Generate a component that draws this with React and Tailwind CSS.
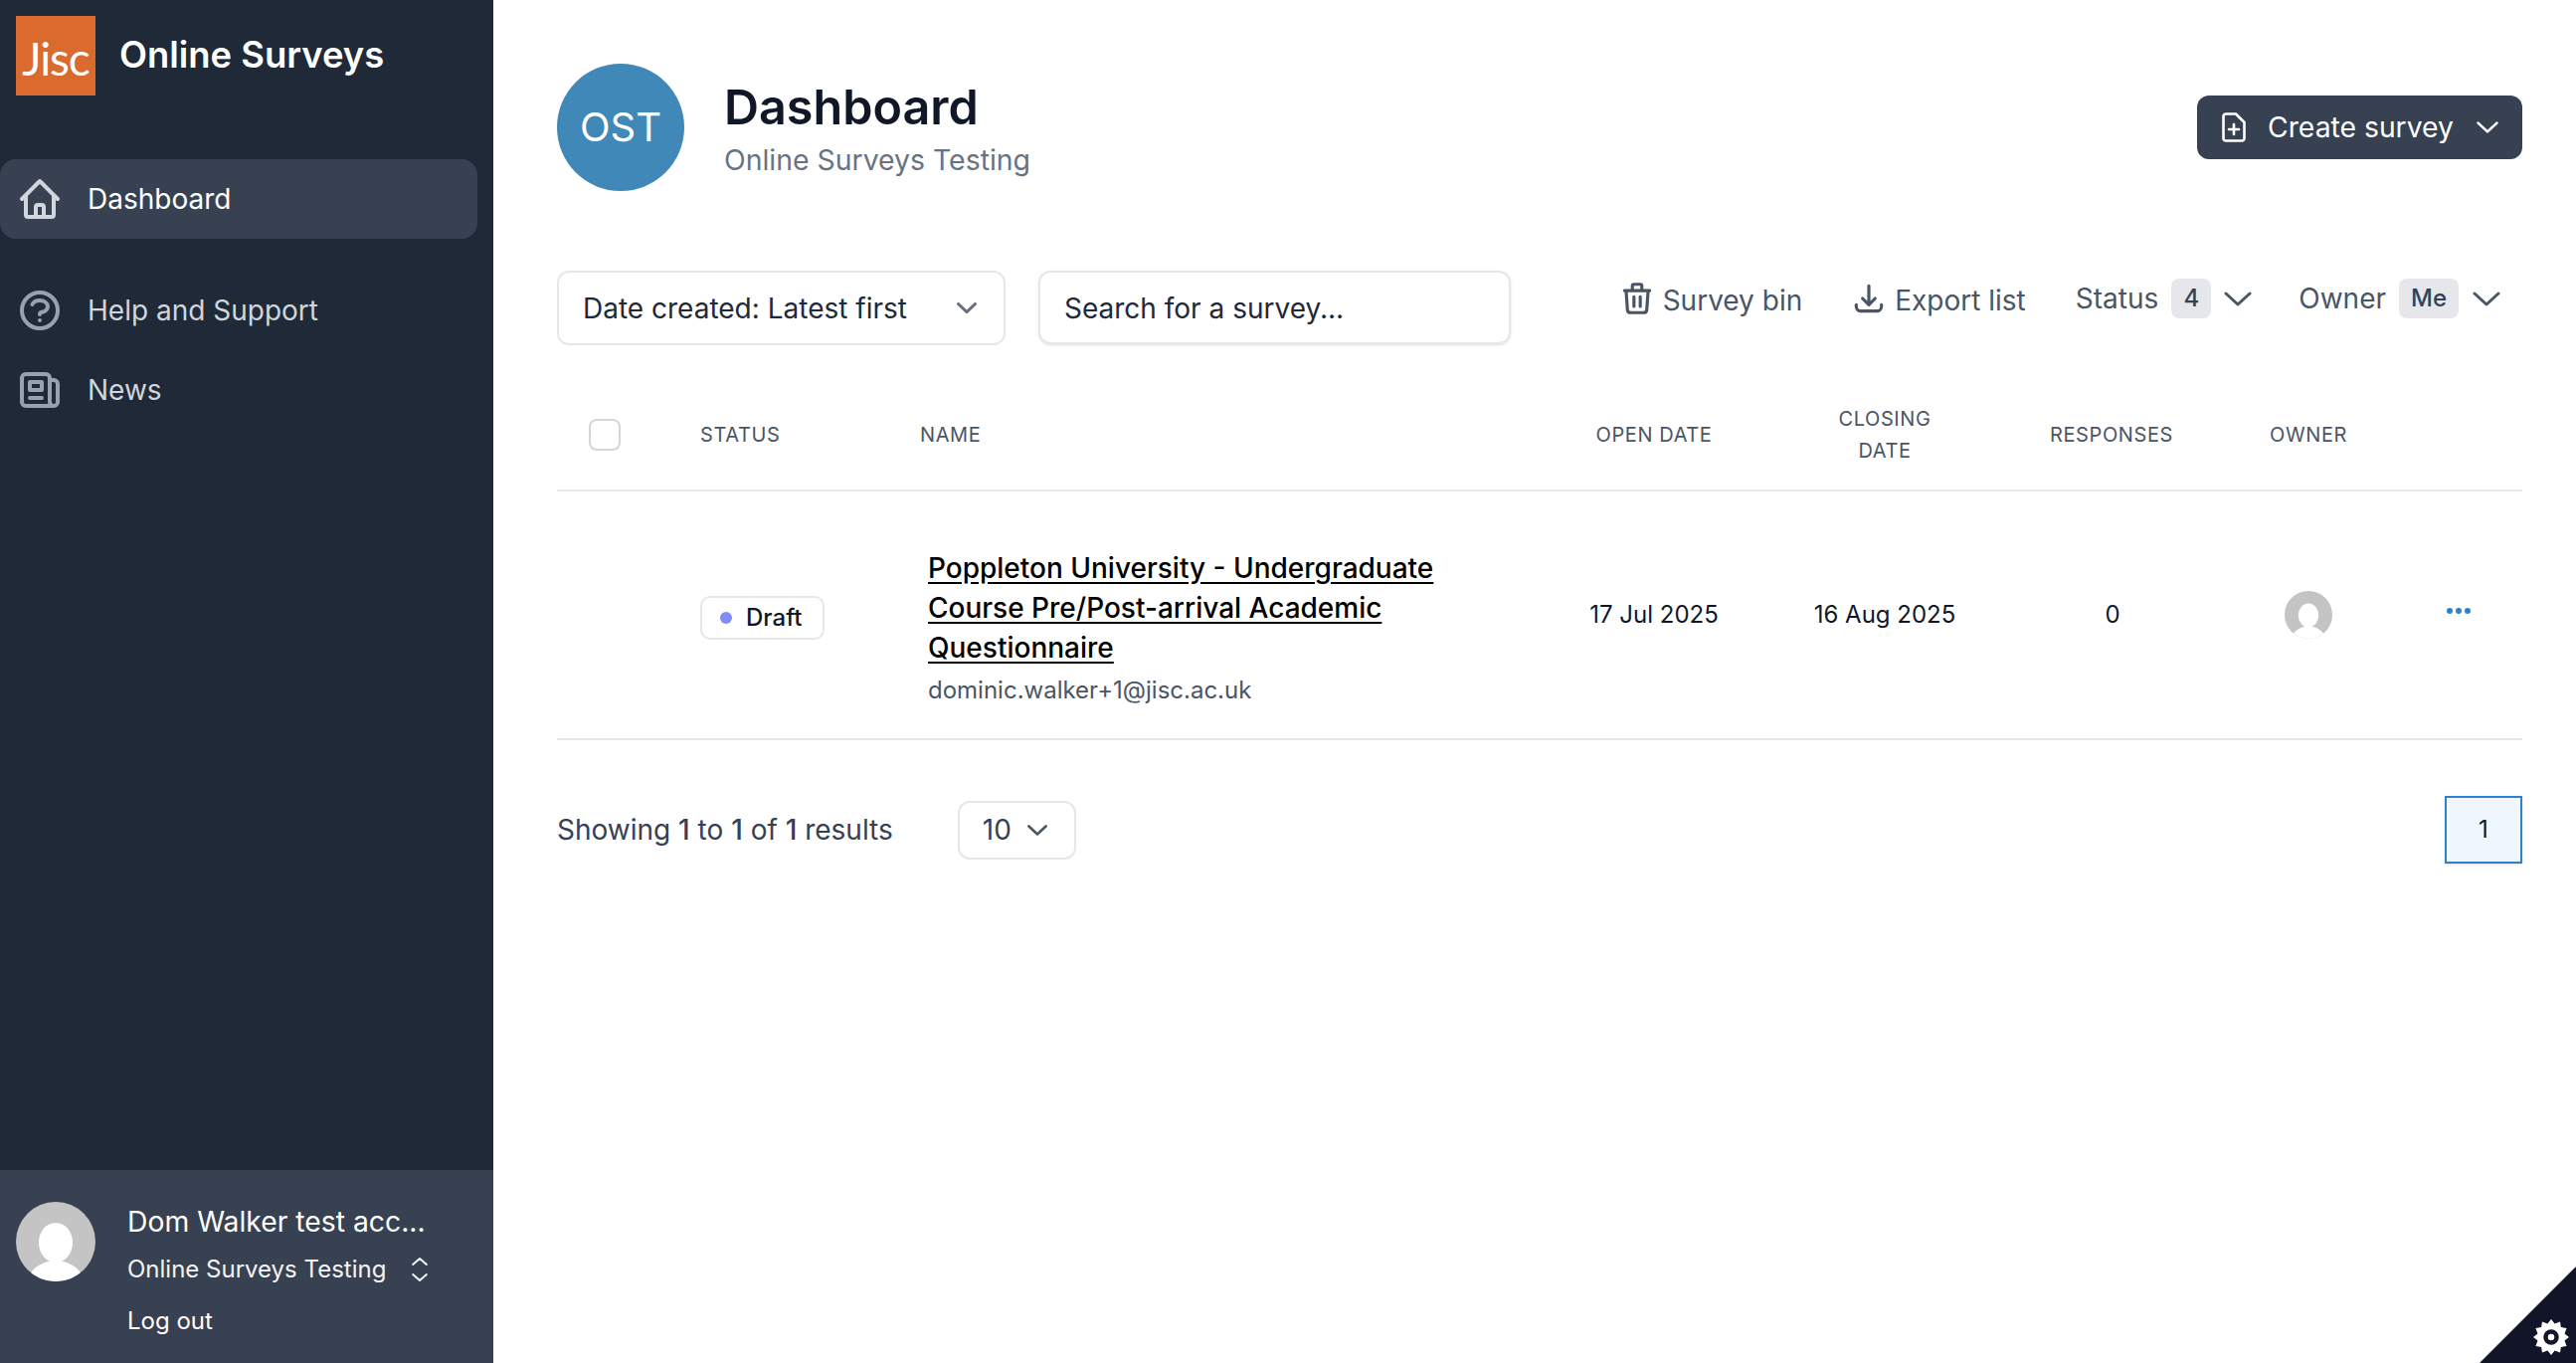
import { HiOutlineHome, HiOutlineQuestionMarkCircle, HiOutlineNewspaper, HiOutlineTrash, HiOutlineDownload } from "react-icons/hi";

function Chevron({ className, weight = 3 }) {
  return (
    <svg viewBox="0 0 28 15" fill="none" stroke="currentColor" strokeWidth={weight} strokeLinecap="round" strokeLinejoin="round" preserveAspectRatio="none" className={className}>
      <path d="M2 2l12 11L26 2" vectorEffect="non-scaling-stroke" />
    </svg>
  );
}

function Avatar({ className }) {
  return (
    <svg viewBox="0 0 80 80" className={`rounded-full ${className}`}>
      <rect width="80" height="80" fill="#c4c4c4" />
      <ellipse cx="40" cy="41" rx="17" ry="20" fill="#fff" />
      <ellipse cx="40" cy="84" rx="29" ry="25" fill="#fff" />
    </svg>
  );
}

function Gear() {
  const pts = [];
  for (let i = 0; i < 24; i++) {
    const r = i % 2 === 0 ? 18 : 14;
    const a = (i * Math.PI) / 12;
    pts.push(`${18 + r * Math.sin(a)},${18 - r * Math.cos(a)}`);
  }
  return (
    <svg viewBox="0 0 36 36" className="w-9 h-9">
      <polygon points={pts.join(" ")} fill="#fff" />
      <circle cx="18" cy="18" r="5.5" fill="none" stroke="#12152a" strokeWidth="4.5" />
    </svg>
  );
}

function NavItem({ icon: Icon, label, active }) {
  return (
    <div className={`flex items-center h-20 w-[480px] rounded-2xl pl-4 gap-6 text-[28px] ${active ? "bg-[#374151] text-white" : "text-gray-300"}`}>
      <Icon className={`w-12 h-12 ${active ? "text-gray-300" : "text-gray-400"}`} />
      <span>{label}</span>
    </div>
  );
}

function Sidebar() {
  return (
    <aside className="w-[496px] shrink-0 h-full bg-[#1f2937] flex flex-col">
      <div className="flex items-center gap-6 pl-4 pt-4">
        <div className="w-20 h-20 bg-[#da6a2d] flex items-center justify-center">
          <span className="text-white text-[46px] font-['Lato',sans-serif] tracking-tight mt-[5px]">Jisc</span>
        </div>
        <span className="text-white text-[36.4px] font-semibold -mt-[2px]">Online Surveys</span>
      </div>
      <nav className="mt-16">
        <NavItem icon={HiOutlineHome} label="Dashboard" active />
        <div className="mt-8">
          <NavItem icon={HiOutlineQuestionMarkCircle} label="Help and Support" />
          <NavItem icon={HiOutlineNewspaper} label="News" />
        </div>
      </nav>
      <div className="mt-auto h-[194px] bg-[#374151] flex pl-4 pt-8 gap-[32px] text-white">
        <Avatar className="w-20 h-20 shrink-0" />
        <div className="flex flex-col">
          <span className="text-[28.3px] leading-10">Dom Walker test acc...</span>
          <div className="flex items-center gap-[26px] mt-[8px] text-[24px] leading-10 text-gray-100">
            <span>Online Surveys Testing</span>
            <div className="flex flex-col gap-[8px]">
              <Chevron className="w-4 h-2 rotate-180" weight={2} />
              <Chevron className="w-4 h-2" weight={2} />
            </div>
          </div>
          <span className="text-[24px] leading-10 mt-3">Log out</span>
        </div>
      </div>
    </aside>
  );
}

function Toolbar() {
  return (
    <div className="flex justify-between mt-20 text-[28px]">
      <div className="flex gap-[33px]">
        <div className="w-[451px] h-[75px] border-2 border-gray-200 rounded-xl flex items-center justify-between pl-[24px] pr-[27px] text-gray-800">
          <span>Date created: Latest first</span>
          <Chevron className="w-5 h-[11px] text-gray-500" />
        </div>
        <input
          placeholder="Search for a survey..."
          className="w-[475px] h-[74px] border-2 border-gray-200 rounded-xl shadow-sm pl-[24px] pt-[2px] text-[28px] text-gray-800 placeholder:text-gray-800 outline-none"
        />
      </div>
      <div className="flex items-center h-10 mt-2 pr-[22px] text-gray-600">
        <div className="flex items-center gap-[12px] mt-1">
          <HiOutlineTrash className="w-[38px] h-[38px] -mx-[5px] -mt-1" />
          <span>Survey bin</span>
        </div>
        <div className="flex items-center gap-[12px] mt-1 ml-[53px]">
          <HiOutlineDownload className="w-[38px] h-[38px] -mx-[5px] -mt-1" />
          <span>Export list</span>
        </div>
        <span className="ml-[50px]">Status</span>
        <span className="ml-[13px] w-10 h-10 rounded-lg bg-gray-200 flex items-center justify-center text-[24px] font-medium text-gray-700">4</span>
        <Chevron className="ml-[13px] w-7 h-[15px]" />
        <span className="ml-[47px]">Owner</span>
        <span className="ml-[13px] w-[60px] h-10 rounded-lg bg-gray-200 flex items-center justify-center text-[24px] font-medium text-gray-700">Me</span>
        <Chevron className="ml-[14px] w-7 h-[15px]" />
      </div>
    </div>
  );
}

const cols = "grid grid-cols-[144px_221px_620px_236px_228px_228px_168px_131px]";

function SurveyTable() {
  return (
    <div className="mt-[34px]">
      <div className={`${cols} h-[113px] items-center border-b-2 border-gray-200 text-[20px] leading-8 tracking-[0.03em] uppercase text-gray-600`}>
        <div className="pl-8">
          <div className="w-8 h-8 border-2 border-gray-300 rounded-lg" />
        </div>
        <div>Status</div>
        <div>Name</div>
        <div className="text-center">Open date</div>
        <div className="text-center">Closing<br />date</div>
        <div className="text-center">Responses</div>
        <div className="text-center">Owner</div>
        <div />
      </div>
      <div className={`${cols} h-[250px] items-center border-b-2 border-gray-200 text-[24px] text-gray-900`}>
        <div />
        <div className="self-start pt-[105px]">
          <div className="w-[125px] h-[44px] border-2 border-gray-200 rounded-[10px] flex items-center pl-[18px] gap-[14px] font-medium">
            <span className="w-3 h-3 rounded-full bg-[#818cf8]" />
            <span>Draft</span>
          </div>
        </div>
        <div className="self-start pt-[57px] pl-2">
          <a className="block text-[28px] leading-10 font-medium text-black underline underline-offset-[4px]">
            Poppleton University - Undergraduate<br />Course Pre/Post-arrival Academic<br />Questionnaire
          </a>
          <div className="mt-[7px] leading-8 text-gray-600">dominic.walker+1@jisc.ac.uk</div>
        </div>
        <div className="text-center">17 Jul 2025</div>
        <div className="text-center">16 Aug 2025</div>
        <div className="text-center pl-[2px]">0</div>
        <div className="flex justify-center">
          <Avatar className="w-12 h-12" />
        </div>
        <div className="flex gap-[3px] pl-[55px] -mt-2">
          <span className="w-[6px] h-[6px] rounded-full bg-[#2f80ce]" />
          <span className="w-[6px] h-[6px] rounded-full bg-[#2f80ce]" />
          <span className="w-[6px] h-[6px] rounded-full bg-[#2f80ce]" />
        </div>
      </div>
    </div>
  );
}

function Pagination() {
  return (
    <div className="flex items-center justify-between mt-14 h-[68px] text-gray-700">
      <div className="flex items-center">
        <span className="text-[28px]">
          Showing <span className="font-medium">1</span> to <span className="font-medium">1</span> of <span className="font-medium">1</span> results
        </span>
        <div className="ml-[65px] w-[119px] h-[59px] border-2 border-gray-200 rounded-xl flex items-center pl-[23px] gap-4 text-[28px]">
          <span>10</span>
          <Chevron className="w-5 h-[11px] text-gray-600" weight={2.6} />
        </div>
      </div>
      <div className="w-[78px] h-[68px] border-2 border-[#2f80ce] bg-[#eff6fc] shadow-sm flex items-center justify-center text-[24px] text-gray-900">1</div>
    </div>
  );
}

export default function App() {
  return (
    <div className="flex h-screen overflow-hidden bg-white font-['Inter',sans-serif] relative">
      <Sidebar />
      <main className="flex-1 pl-16 pr-[54px] pt-16">
        <div className="flex items-center justify-between">
          <div className="flex items-center gap-10">
            <div className="w-32 h-32 rounded-full bg-[#3f88b8] flex items-center justify-center text-white text-[40px]">OST</div>
            <div className="mt-[2px]">
              <h1 className="text-[48.5px] leading-[60px] font-semibold text-gray-900">Dashboard</h1>
              <p className="mt-[3px] text-[28.4px] leading-10 text-gray-500">Online Surveys Testing</p>
            </div>
          </div>
          <button className="w-[327px] h-16 rounded-xl bg-[#374151] text-white text-[28.3px] flex items-center pl-[25px]">
            <svg viewBox="0 0 24 30" fill="none" stroke="currentColor" strokeWidth="2.6" strokeLinecap="round" strokeLinejoin="round" className="w-6 h-[30px] shrink-0">
              <path d="M4 1.5h10l8.5 8.5v16a2.5 2.5 0 0 1-2.5 2.5H4A2.5 2.5 0 0 1 1.5 26V4A2.5 2.5 0 0 1 4 1.5z" />
              <path d="M12 12v10M7 17h10" />
            </svg>
            <span className="ml-[22px]">Create survey</span>
            <Chevron className="ml-[23px] w-[22px] h-3" weight={2.6} />
          </button>
        </div>
        <Toolbar />
        <SurveyTable />
        <Pagination />
      </main>
      <div className="absolute right-0 bottom-0 w-[97px] h-[97px] bg-[#12152a] [clip-path:polygon(100%_0,100%_100%,0_100%)] flex items-end justify-end pr-[7px] pb-[8px]">
        <Gear />
      </div>
    </div>
  );
}
